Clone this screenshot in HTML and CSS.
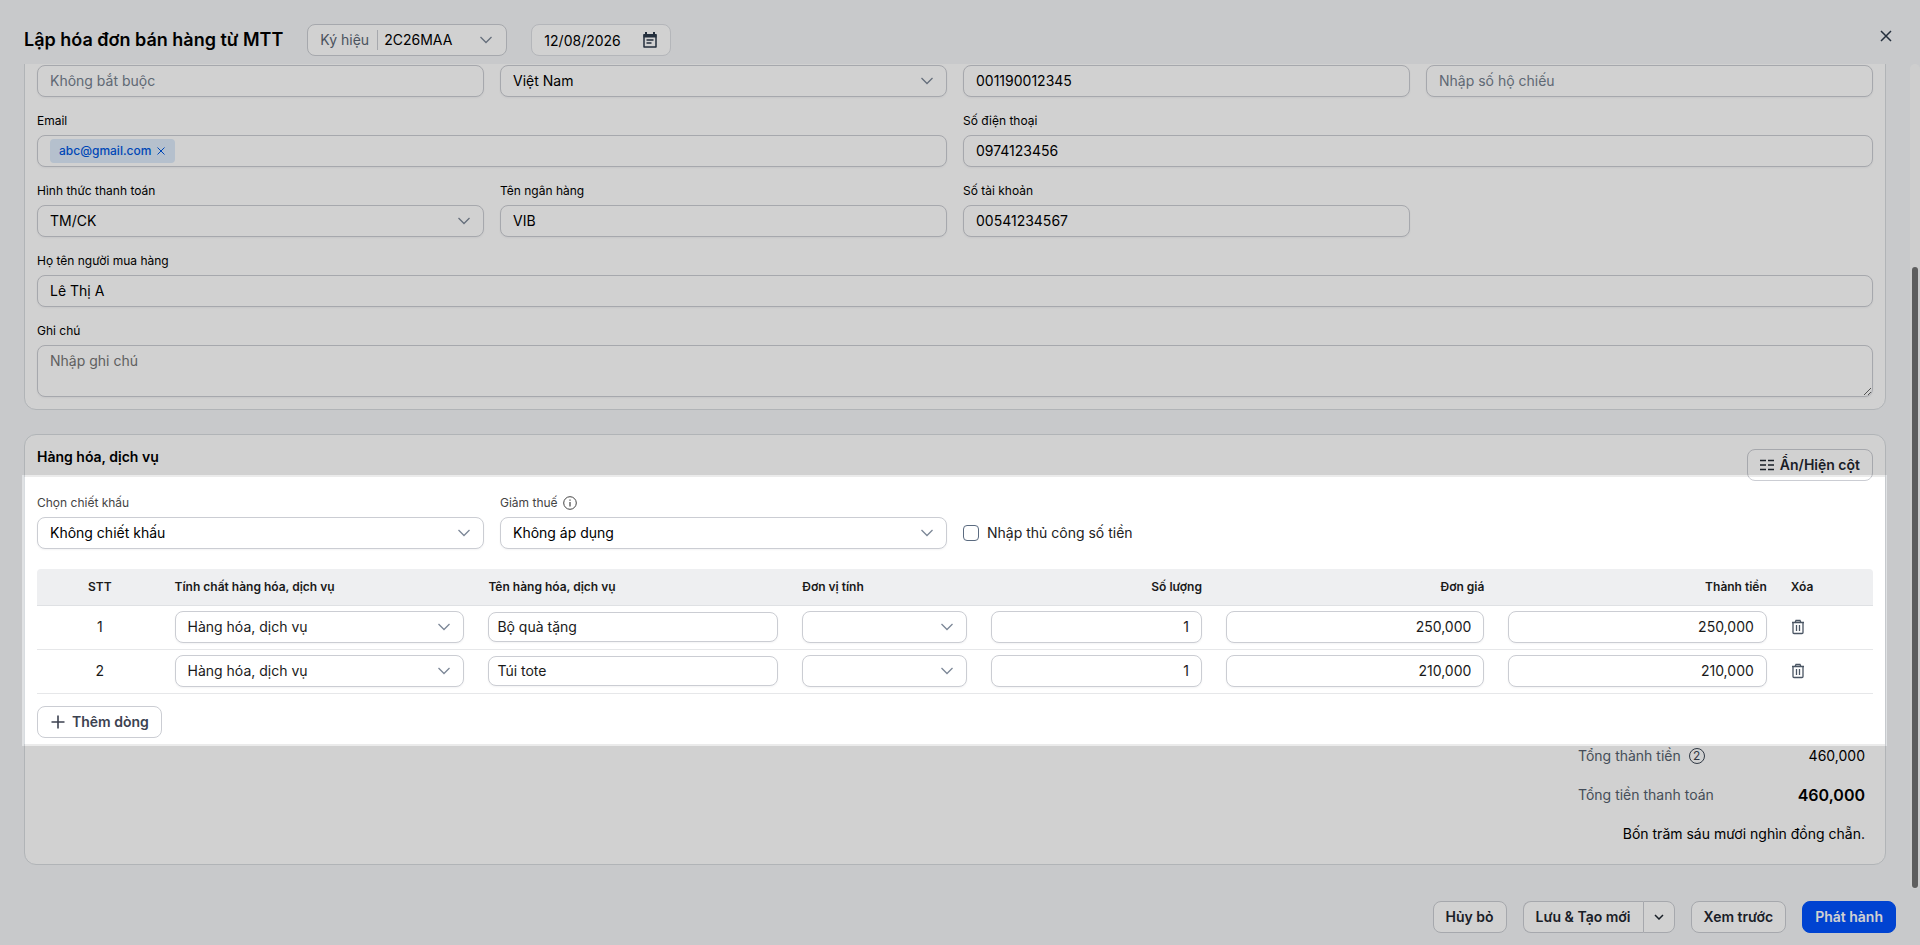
FILE: index.html
```html
<!DOCTYPE html>
<html lang="vi">
<head>
    <meta charset="UTF-8">
    <meta name="viewport" content="width=device-width, initial-scale=1.0">
    <title>Lập hóa đơn bán hàng từ MTT</title>
    <link rel="stylesheet" href="styles.css">
</head>
<body>
    <!-- Shared icons -->
    <svg class="sprite" aria-hidden="true">
        <symbol id="chevron" viewBox="0 0 14 14"><path d="M1.5 4l5.500 5.500L12.500 4" fill="none" stroke="currentColor" stroke-width="1.300"/></symbol>
        <symbol id="trash" viewBox="0 0 14 16"><path d="M1 3.500h12M4 3.500l1-2h4l1 2M2 3.500v10a1 1 0 0 0 1 1h8a1 1 0 0 0 1-1v-10M5.500 6v6M8.500 6v6" fill="none" stroke="currentColor" stroke-width="1.300"/></symbol>
    </svg>

    <div class="page">
        <header class="header">
            <h1>Lập hóa đơn bán hàng từ MTT</h1>
            <div class="symbol-box">
                <label for="symbol">Ký hiệu</label>
                <div class="select">
                    <select id="symbol"><option>2C26MAA</option></select>
                    <svg><use href="#chevron"/></svg>
                </div>
            </div>
            <div class="date-box">
                <input type="text" value="12/08/2026" aria-label="Ngày hóa đơn">
                <svg width="16" height="16" viewBox="0 0 16 16"><path d="M2 3h12v12H2z" fill="none" stroke="currentColor" stroke-width="1.500" stroke-linejoin="round"/><path d="M1.500 2h13v3.500h-13z" fill="currentColor"/><path d="M4 0v3M12 0v3" stroke="currentColor" stroke-width="2"/><path d="M4.500 8h7M4.500 11h5" stroke="currentColor" stroke-width="1.500"/></svg>
            </div>
            <button class="close" aria-label="Đóng">
                <svg width="12" height="12" viewBox="0 0 12 12"><path d="M1 1l10 10M11 1L1 11" stroke="currentColor" stroke-width="1.500"/></svg>
            </button>
        </header>

        <div class="scroller">
            <main class="content">
                <section class="card">
                    <div class="form-grid">
                        <input type="text" placeholder="Không bắt buộc" aria-label="Mã đơn vị">
                        <div class="select">
                            <select aria-label="Quốc gia"><option>Việt Nam</option></select>
                            <svg><use href="#chevron"/></svg>
                        </div>
                        <input type="text" value="001190012345" aria-label="Số CCCD">
                        <input type="text" placeholder="Nhập số hộ chiếu" aria-label="Số hộ chiếu">

                        <div class="field span-2">
                            <label for="email">Email</label>
                            <div class="tag-input">
                                <span class="tag">abc@gmail.com
                                    <button aria-label="Xóa email"><svg width="8" height="8" viewBox="0 0 8 8"><path d="M.5.5l7 7M7.500.5l-7 7" stroke="currentColor"/></svg></button>
                                </span>
                                <input type="text" id="email">
                            </div>
                        </div>
                        <div class="field span-2">
                            <label for="phone">Số điện thoại</label>
                            <input type="text" id="phone" value="0974123456">
                        </div>

                        <div class="field">
                            <label for="payment">Hình thức thanh toán</label>
                            <div class="select">
                                <select id="payment"><option>TM/CK</option></select>
                                <svg><use href="#chevron"/></svg>
                            </div>
                        </div>
                        <div class="field">
                            <label for="bank">Tên ngân hàng</label>
                            <input type="text" id="bank" value="VIB">
                        </div>
                        <div class="field">
                            <label for="account">Số tài khoản</label>
                            <input type="text" id="account" value="00541234567">
                        </div>

                        <div class="field span-4">
                            <label for="buyer">Họ tên người mua hàng</label>
                            <input type="text" id="buyer" value="Lê Thị A">
                        </div>
                        <div class="field span-4">
                            <label for="note">Ghi chú</label>
                            <textarea id="note" placeholder="Nhập ghi chú"></textarea>
                        </div>
                    </div>
                </section>

                <section class="card">
                    <div class="card-head">
                        <h2>Hàng hóa, dịch vụ</h2>
                        <button class="btn">
                            <svg width="14" height="12" viewBox="0 0 14 12"><path d="M0 1.500h6M8 1.500h6M0 6h6M8 6h6M0 10.500h6M8 10.500h6" stroke="currentColor" stroke-width="1.300"/></svg>
                            Ẩn/Hiện cột
                        </button>
                    </div>

                    <div class="form-grid">
                        <div class="field muted">
                            <label for="discount">Chọn chiết khấu</label>
                            <div class="select">
                                <select id="discount"><option>Không chiết khấu</option></select>
                                <svg><use href="#chevron"/></svg>
                            </div>
                        </div>
                        <div class="field muted">
                            <label for="tax">Giảm thuế
                                <svg width="14" height="14" viewBox="0 0 14 14"><circle cx="7" cy="7" r="6.300" fill="none" stroke="currentColor"/><path d="M7 6v4.500M7 3.500v1.300" stroke="currentColor" stroke-width="1.200"/></svg>
                            </label>
                            <div class="select">
                                <select id="tax"><option>Không áp dụng</option></select>
                                <svg><use href="#chevron"/></svg>
                            </div>
                        </div>
                        <label class="check"><input type="checkbox"> Nhập thủ công số tiền</label>
                    </div>

                    <table class="items">
                        <colgroup>
                            <col class="w-80"><col class="w-200"><col class="w-200"><col class="w-120">
                            <col class="w-150"><col class="w-180"><col class="w-180"><col class="w-60">
                        </colgroup>
                        <thead>
                            <tr>
                                <th class="center">STT</th>
                                <th>Tính chất hàng hóa, dịch vụ</th>
                                <th>Tên hàng hóa, dịch vụ</th>
                                <th>Đơn vị tính</th>
                                <th class="right">Số lượng</th>
                                <th class="right">Đơn giá</th>
                                <th class="right">Thành tiền</th>
                                <th>Xóa</th>
                            </tr>
                        </thead>
                        <tbody>
                            <tr>
                                <td class="center">1</td>
                                <td><div class="select"><select aria-label="Tính chất"><option>Hàng hóa, dịch vụ</option></select><svg><use href="#chevron"/></svg></div></td>
                                <td><input type="text" class="name" value="Bộ quà tặng" aria-label="Tên hàng hóa"></td>
                                <td><div class="select"><select aria-label="Đơn vị tính"><option></option></select><svg><use href="#chevron"/></svg></div></td>
                                <td><input type="text" class="right" value="1" aria-label="Số lượng"></td>
                                <td><input type="text" class="right" value="250,000" aria-label="Đơn giá"></td>
                                <td><input type="text" class="right" value="250,000" aria-label="Thành tiền"></td>
                                <td><button class="delete" aria-label="Xóa dòng"><svg><use href="#trash"/></svg></button></td>
                            </tr>
                            <tr>
                                <td class="center">2</td>
                                <td><div class="select"><select aria-label="Tính chất"><option>Hàng hóa, dịch vụ</option></select><svg><use href="#chevron"/></svg></div></td>
                                <td><input type="text" class="name" value="Túi tote" aria-label="Tên hàng hóa"></td>
                                <td><div class="select"><select aria-label="Đơn vị tính"><option></option></select><svg><use href="#chevron"/></svg></div></td>
                                <td><input type="text" class="right" value="1" aria-label="Số lượng"></td>
                                <td><input type="text" class="right" value="210,000" aria-label="Đơn giá"></td>
                                <td><input type="text" class="right" value="210,000" aria-label="Thành tiền"></td>
                                <td><button class="delete" aria-label="Xóa dòng"><svg><use href="#trash"/></svg></button></td>
                            </tr>
                        </tbody>
                    </table>

                    <button class="btn add">
                        <svg width="14" height="14" viewBox="0 0 14 14"><path d="M7 .5v13M.5 7h13" stroke="currentColor" stroke-width="1.600"/></svg>
                        Thêm dòng
                    </button>

                    <div class="totals">
                        <div class="total-row">
                            <span class="total-label">Tổng thành tiền <i class="circle">2</i></span>
                            <span>460,000</span>
                        </div>
                        <div class="total-row">
                            <span class="total-label">Tổng tiền thanh toán</span>
                            <strong>460,000</strong>
                        </div>
                        <div class="total-row words">Bốn trăm sáu mươi nghìn đồng chẵn.</div>
                    </div>
                </section>
            </main>
            <div class="scrollbar"><div class="thumb"></div></div>
        </div>

        <footer class="footer">
            <button class="btn">Hủy bỏ</button>
            <div class="split">
                <button class="btn">Lưu &amp; Tạo mới</button>
                <button class="btn arrow" aria-label="Thêm lựa chọn">
                    <svg width="10" height="6" viewBox="0 0 10 6"><path d="M1 1l4 4 4-4" fill="none" stroke="currentColor" stroke-width="1.500"/></svg>
                </button>
            </div>
            <button class="btn">Xem trước</button>
            <button class="btn primary">Phát hành</button>
        </footer>

        <!-- Guide highlight over the item table -->
        <div class="spotlight"></div>
    </div>
</body>
</html>
```
FILE: styles.css
```css
* {
    box-sizing: border-box;
}
body {
    margin: 0;
    background: #f4f6f8;
    color: #000;
    font: 14px/20px Inter, sans-serif;
}
h1, h2 {
    margin: 0;
    font-weight: 600;
}
h1 {
    font-size: 18px;
    line-height: 24px;
}
h2 {
    font-size: 14px;
}
button, input, select, textarea {
    font: inherit;
    color: inherit;
    margin: 0;
}
button {
    border: 0;
    background: none;
    padding: 0;
    cursor: pointer;
}
.sprite {
    display: none;
}
.page {
    position: relative;
    display: flex;
    flex-direction: column;
    height: 100vh;
    overflow: hidden;
}

/* Form controls */
input[type="text"], select, textarea, .tag-input {
    display: block;
    width: 100%;
    height: 32px;
    padding: 0 12px 1px;
    background: #fff;
    border: 1px solid #cbcdd3;
    border-radius: 8px;
    outline: none;
    box-shadow: 0 1px 2px rgba(16, 24, 40, 0.05);
}
input::placeholder {
    color: #75808e;
}
textarea {
    height: 52px;
    padding: 5px 12px;
    resize: vertical;
}
.form-grid {
    display: grid;
    grid-template-columns: repeat(4, 1fr);
    gap: 16px;
}
.span-2 {
    grid-column: span 2;
}
.span-4 {
    grid-column: span 4;
}
.field {
    display: flex;
    flex-direction: column;
    gap: 6px;
}
.field > label {
    display: flex;
    align-items: center;
    gap: 5px;
    font-size: 12px;
    line-height: 16px;
}
.muted > label {
    color: #444;
}
.select {
    display: grid;
    align-items: center;
}
.select > * {
    grid-area: 1 / 1;
}
.select select {
    appearance: none;
    padding-right: 32px;
}
.select svg {
    justify-self: end;
    width: 14px;
    height: 14px;
    margin-right: 13px;
    color: #7c8797;
    pointer-events: none;
}
.tag-input {
    display: flex;
    align-items: center;
    gap: 8px;
}
.tag-input input[type="text"] {
    flex: 1;
    height: 24px;
    padding: 0;
    border: 0;
    box-shadow: none;
}
.tag {
    display: flex;
    align-items: center;
    gap: 6px;
    height: 24px;
    padding: 0 10px 0 9px;
    background: #ddebfa;
    border-radius: 4px;
    color: #0057e0;
    font-size: 12px;
    font-weight: 500;
}
.tag button {
    display: flex;
}
.check {
    display: flex;
    align-items: center;
    align-self: end;
    gap: 8px;
    height: 32px;
    color: #222;
}
.check input {
    appearance: none;
    width: 16px;
    height: 16px;
    border: 1px solid #5b6b80;
    border-radius: 4px;
}
.btn {
    display: inline-flex;
    align-items: center;
    gap: 6px;
    height: 32px;
    padding: 0 12px;
    background: #fff;
    border: 1px solid #cbcdd3;
    border-radius: 8px;
    color: #1f2730;
    font-weight: 600;
    white-space: nowrap;
}

/* Header */
.header {
    display: flex;
    align-items: center;
    gap: 24px;
    padding: 24px 28px 8px 24px;
}
.symbol-box, .date-box {
    display: flex;
    align-items: center;
    height: 32px;
    background: #fff;
    border: 1px solid #cbcdd3;
    border-radius: 8px;
}
.symbol-box {
    width: 200px;
    padding-left: 12px;
}
.symbol-box label {
    flex: none;
    color: #5b6673;
    padding-right: 8px;
    border-right: 1px solid #cbcdd3;
}
.symbol-box .select {
    flex: 1;
}
.symbol-box select {
    height: 30px;
    border: 0;
    padding-left: 6px;
    background: none;
    box-shadow: none;
}
.date-box {
    width: 140px;
    padding: 0 12px;
    justify-content: space-between;
    border-color: #dcdee3;
}
.date-box input[type="text"] {
    width: 84px;
    height: 30px;
    padding: 0;
    border: 0;
    box-shadow: none;
}
.date-box svg {
    color: #2d3a4b;
}
.close {
    display: flex;
    margin-left: auto;
    padding: 0 0 8px;
    color: #2d3a4b;
}

.scroller {
    flex: 1;
    min-height: 0;
    display: flex;
}
.content {
    flex: 1;
    min-width: 0;
    display: flex;
    flex-direction: column;
    justify-content: flex-end;
    gap: 24px;
    padding: 0 24px 24px;
    overflow: hidden;
}
.scrollbar {
    display: flex;
    align-items: flex-end;
    width: 10px;
    padding: 0 2px 1px;
    background: #fcfcfc;
    border-radius: 6px;
}
.thumb {
    width: 100%;
    height: calc(75% + 3px);
    background: #757575;
    border-radius: 3px;
}
.card {
    flex: none;
    padding: 12px;
    background: #fff;
    border: 1px solid #d8dce0;
    border-radius: 12px;
}
.card-head {
    display: flex;
    justify-content: space-between;
    min-height: 36px;
    margin-bottom: 12px;
}
.card-head .btn {
    align-self: center;
}

/* Items table */
.items {
    width: 100%;
    margin: 20px 0 12px;
    table-layout: fixed;
    border-collapse: separate;
    border-spacing: 0;
    color: #1a1a1a;
}
.w-60 { width: 60px; }
.w-80 { width: 80px; }
.w-120 { width: 120px; }
.w-150 { width: 150px; }
.w-180 { width: 180px; }
.w-200 { width: 200px; }
.items th {
    height: 37px;
    padding: 0 12px;
    background: #eeeff1;
    border-bottom: 1px solid #dfe1e4;
    font-size: 12px;
    font-weight: 600;
    text-align: left;
}
.items th:first-child {
    border-top-left-radius: 4px;
}
.items th:last-child {
    border-top-right-radius: 4px;
}
.items td {
    height: 44px;
    padding: 5px 12px 6px;
    border-bottom: 1px solid #e6e7e9;
}
.items .center {
    text-align: center;
}
.items .right {
    text-align: right;
}
.items .name {
    height: 30px;
    padding: 0 8px 1px;
}
.delete {
    display: flex;
}
.delete svg {
    width: 14px;
    height: 16px;
    color: #4a5563;
}
.add {
    gap: 7px;
    padding-left: 13px;
    color: #3c4250;
}

/* Totals */
.totals {
    display: grid;
    gap: 16px;
    width: 295px;
    margin: 6px 0 7px auto;
    padding-right: 8px;
}
.total-row {
    display: flex;
    align-items: center;
    justify-content: space-between;
    height: 23px;
}
.total-row strong {
    font-size: 16px;
    font-weight: 600;
}
.total-row.words {
    justify-content: flex-end;
}
.total-label {
    display: flex;
    align-items: center;
    gap: 8px;
    color: #555f6d;
}
.circle {
    display: flex;
    align-items: center;
    justify-content: center;
    width: 16px;
    height: 16px;
    border: 1px solid currentColor;
    border-radius: 50%;
    color: #3c4654;
    font-size: 12px;
    font-style: normal;
}

/* Footer */
.footer {
    display: flex;
    justify-content: flex-end;
    gap: 16px;
    padding: 12px 24px;
}
.split {
    display: flex;
}
.split .btn:first-child {
    border-radius: 8px 0 0 8px;
    border-right: 0;
}
.split .arrow {
    padding: 0 10px;
    border-radius: 0 8px 8px 0;
}
.btn.primary {
    background: #0052ff;
    border-color: #0052ff;
    color: #fff;
}

.spotlight {
    position: absolute;
    inset: 475px 33px 199px 22px;
    border: 2px solid rgba(0, 0, 0, 0.08);
    box-shadow: 0 0 0 9999px rgba(0, 0, 0, 0.18);
    pointer-events: none;
}
```
